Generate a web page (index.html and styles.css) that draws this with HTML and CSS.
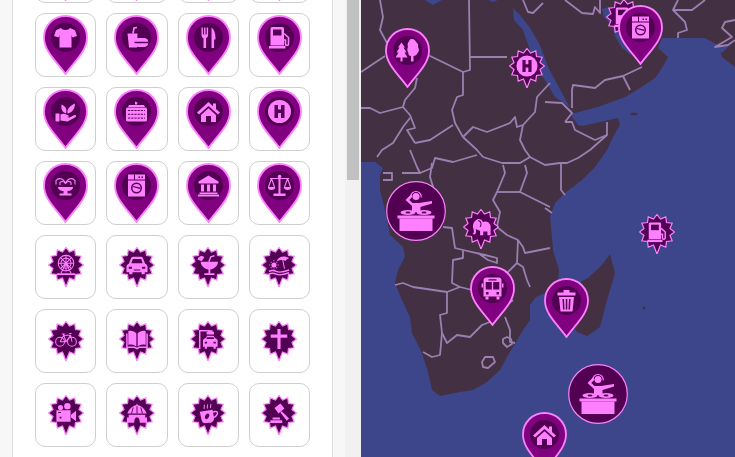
FILE: index.html
```html
<!DOCTYPE html>
<html lang="en">
<head>
<meta charset="utf-8">
<title>Map markers</title>
<link rel="stylesheet" href="styles.css">
</head>
<body>
<svg class="sprite" aria-hidden="true">
<defs>
<symbol id="pin" viewBox="0 0 45 60"><path class="pin-body" d="M22.5 1C10.5 1 1 10.5 1 22.5C1 36 13 46 22.5 59C32 46 44 36 44 22.5C44 10.5 34.5 1 22.5 1Z"/><circle class="dark" cx="22.5" cy="22.5" r="14.5"/></symbol>
<symbol id="star" viewBox="0 0 36 40"><polygon class="star-body" points="18,.5 21.5,5 26.75,2.85 27.5,8.5 33.15,9.25 31,14.5 35.5,18 31,21.5 33.15,26.75 27.5,27.5 26.75,33.15 21.5,31 18,40 14.5,31 9.25,33.15 8.5,27.5 2.85,26.75 5,21.5 .5,18 5,14.5 2.85,9.25 8.5,8.5 9.25,2.85 14.5,5"/></symbol>
<symbol id="i-tee" viewBox="0 0 24 24"><path class="f" d="M7.500 2.500L2.500 4.800L.5 10.500L5 12L6 9.800V22H18V9.800L19 12L23.500 10.500L21.500 4.800L16.500 2.500C15.500 5 8.500 5 7.500 2.500Z"/></symbol>
<symbol id="i-food" viewBox="0 0 24 24"><path class="f" d="M3 8H13L12.500 22H4.500Z"/><path class="l" d="M8.500 8L9.500 2.500L12.500 2"/><rect class="f" x="9.500" y="12.500" width="14.500" height="9" rx="4.500"/><path class="c" d="M10 16.200H24V17.800H10Z"/></symbol>
<symbol id="i-cutlery" viewBox="0 0 24 24"><path class="f" d="M5 2H6.400V9H7.600V2H9V9H10.200V2H11.600V9C11.600 12 9.800 12.500 9.600 13V22.500H7V13C6.800 12.500 5 12 5 9Z"/><path class="f" d="M15 22.500V2C18 4 19.200 9 19 14H17.600V22.500Z"/></symbol>
<symbol id="i-fuel" viewBox="0 0 24 24"><path class="f" d="M4.500 1.500H15A1.500 1.500 0 0 1 16.500 3V20H3V3A1.500 1.500 0 0 1 4.500 1.500Z"/><rect class="c" x="5.500" y="4" width="8.500" height="6"/><rect class="f" x="1.500" y="20.500" width="16.500" height="2.500"/><path class="l" d="M16.500 8L21 12V18.500A1.500 1.500 0 0 1 18 18.500V14.500H16.500"/></symbol>
<symbol id="i-plant" viewBox="0 0 24 24"><path class="f" d="M12.500 14C8 12.500 7.500 8.500 8 5C11 6 14 9 12.500 14Z"/><path class="f" d="M14 14C13 9 17 6 21.500 4C21.500 9 19 13 14 14Z"/><path class="f" d="M2 14H6V22H2Z"/><path class="f" d="M7 15C10 13 13 15 15 16C16 17.300 14 18 12 17.500L16 18L21 15.500C23 15 23 17 21.500 18L14 22L7 21Z"/></symbol>
<symbol id="i-keys" viewBox="0 0 24 24"><path class="f" d="M10.500 2L13 3L12.500 5H10.500Z"/><path class="f" d="M4.500 5.500H19.500L20.500 7.500H3.500Z"/><rect class="f" x="1.500" y="8" width="21" height="14" rx="1.500"/><path class="cl" d="M3.500 11H20.500M3.500 14.800H20.500M3.500 18.600H20.500"/></symbol>
<symbol id="i-home" viewBox="0 0 24 24"><path class="f" d="M12 2.500L.5 13L2.500 15L12 6.500L21.500 15L23.500 13L19.500 9.500V4H16.500V6.800Z"/><path class="f" d="M4.500 15.500L12 8.800L19.500 15.500V22.500H14.500V16.500H9.500V22.500H4.500Z"/></symbol>
<symbol id="i-h" viewBox="0 0 24 24"><circle class="f" cx="12" cy="12" r="11.500"/><path class="c" d="M7 5.500H10.500V10H13.500V5.500H17V18.500H13.500V13.500H10.500V18.500H7Z"/></symbol>
<symbol id="i-fountain" viewBox="0 0 24 24"><path class="b" d="M12 10C10 4.500 5 4 2.500 7V11M12 10C14 4.500 19 4 21.500 7V11"/><path class="b" d="M12 10C10.500 7.500 8 7.500 6.500 9V11.500M12 10C13.500 7.500 16 7.500 17.500 9V11.500"/><path class="f" d="M4.500 13.500H19.500C19.500 16.500 16 17.500 14 17.500V20H18V22H6V20H10V17.500C8 17.500 4.500 16.500 4.500 13.500Z"/></symbol>
<symbol id="i-washer" viewBox="0 0 24 24"><rect class="f" x="3.500" y="1" width="17" height="22"/><path class="c" d="M3.500 6H20.500V7H3.500ZM9.500 1H10.500V6H9.500ZM14 3H15.500V4.500H14ZM17 3H18.500V4.500H17Z"/><circle class="c" cx="12" cy="14.500" r="5.500"/><circle class="f" cx="12" cy="14.500" r="4"/><path class="c" d="M8.500 13.500L15.500 15.500V14L8.500 12.500Z"/></symbol>
<symbol id="i-bank" viewBox="0 0 24 24"><path class="f" d="M12 2L2 8V10H22V8Z"/><path class="f" d="M4.500 11H7.500V18H4.500ZM10.500 11H13.500V18H10.500ZM16.500 11H19.500V18H16.500ZM3 19H21V20.500H3ZM1.500 21H22.500V23H1.500Z"/></symbol>
<symbol id="i-scales" viewBox="0 0 24 24"><path class="f" d="M11 2H13V20H11ZM6 20H18V22.500H6Z"/><path class="b" d="M2.500 5H21.500M4 5L1 13.500M4 5L7 13.500M20 5L17 13.500M20 5L23 13.500"/><path class="f" d="M.2 13.500H7.800C7.800 17.500.2 17.500.2 13.500ZM16.200 13.500H23.800C23.800 17.500 16.200 17.500 16.200 13.500Z"/><circle class="f" cx="12" cy="3" r="1.800"/></symbol>
<symbol id="i-ferris" viewBox="0 0 24 24"><circle class="b" cx="12" cy="10" r="8.500"/><circle class="b" cx="12" cy="10" r="5.500"/><path class="b" d="M12 1.500V18.500M3.500 10H20.500M6 4L18 16M18 4L6 16M12 10L6.500 21M12 10L17.500 21"/><rect class="f" x="2" y="21" width="20" height="2"/></symbol>
<symbol id="i-car" viewBox="0 0 24 24"><path class="f" d="M3 10.500L5.500 4.500C6 3.500 7 3 8 3H16C17 3 18 3.500 18.500 4.500L21 10.500C22.500 11 23.500 12.500 23.500 14V20H20.500V22H17V20H7V22H3.500V20H.5V14C.5 12.500 1.500 11 3 10.500Z"/><path class="c" d="M5.800 10L7.500 5.500H16.500L18.200 10ZM3 14H6.500V16H3ZM17.500 14H21V16H17.500ZM8.500 17H15.500V18H8.500Z"/></symbol>
<symbol id="i-cocktail" viewBox="0 0 24 24"><path class="f" d="M.5 6A4.500 4.500 0 0 1 8 3.500L5 8Z"/><path class="f" d="M4 8.500H23C22.500 14 18 16.500 14.500 17V21H19V23H8V21H12.500V17C9 16.500 4.500 14 4 8.500Z"/><path class="l" d="M13 8.500L15 3L19 2"/></symbol>
<symbol id="i-beach" viewBox="0 0 24 24"><path class="f" d="M9.500 8C11 2.500 18 1 23 4.500C21 5.500 20 6 19 7.500C17 6 13 6 9.500 8Z"/><path class="b" d="M16 6L18 16"/><circle class="f" cx="6.500" cy="12" r="2.800"/><path class="b" d="M6.500 6.800V8M6.500 16V17.200M1.300 12H2.500M10.500 12H11.700M3 8.500L3.800 9.300M9.200 14.700L10 15.500M10 8.500L9.200 9.300M3.800 14.700L3 15.500"/><path class="l" d="M1 19C4 17.500 6 17.500 9 19C12 20.500 15 20.500 23 17.500M1 22C4 20.500 6 20.500 9 22C12 23.500 16 23 23 20.500"/></symbol>
<symbol id="i-bike" viewBox="0 0 24 24"><circle class="b" cx="5.500" cy="15" r="4.800"/><circle class="b" cx="18.500" cy="15" r="4.800"/><path class="b" d="M5.500 15L9.500 8H17L18.500 15M17 8L12 15H5.500M9 6.500L12 15M7.500 6.500H10.500M15.500 6H18"/></symbol>
<symbol id="i-book" viewBox="0 0 24 24"><path class="f" d="M11.300 6C9 3 5 2.500 2.500 3.500V18.500C5.500 17.500 9 18 11.300 20.500Z"/><path class="f" d="M12.700 6C15 3 19 2.500 21.500 3.500V18.500C18.500 17.500 15 18 12.700 20.500Z"/><path class="l" d="M1 6V21H9.500L12 22.500L14.500 21H23V6"/></symbol>
<symbol id="i-carwash" viewBox="0 0 24 24"><path class="l" d="M3 23V3H14"/><path class="f" d="M12 2.500H17V4H18.500V7H10.500V4H12Z"/><path class="f" d="M9.500 11L11 8.500H18L19.500 11C21.500 11.500 22.500 13 22.500 14V20.500H20.500V22.500H18V20.500H11V22.500H8.500V20.500H6.500V14C6.500 13 7.500 11.500 9.500 11Z"/><path class="c" d="M11 10H18L18.800 12H10.200ZM8.500 15H11V16.800H8.500ZM18 15H20.500V16.800H18Z"/></symbol>
<symbol id="i-cross" viewBox="0 0 24 24"><path class="f" d="M10.300 1H13.700V7H21V10.500H13.700V23H10.300V10.500H3V7H10.300Z"/></symbol>
<symbol id="i-movie" viewBox="0 0 24 24"><circle class="f" cx="6" cy="6" r="2.800"/><circle class="f" cx="13.500" cy="4.500" r="3.500"/><rect class="f" x="1.500" y="9" width="15.500" height="12.500"/><path class="f" d="M17.500 14L23 9.500V21L17.500 17Z"/><path class="c" d="M3.500 11H6.500V12H3.500ZM5 16H7V18H5Z"/></symbol>
<symbol id="i-tent" viewBox="0 0 24 24"><path class="f" d="M12 1.500L13 3.500C17 4 21 8 22.500 12.500H1.500C3 8 7 4 11 3.500Z"/><path class="c" d="M11.500 4.500H12.500V12.500H11.500ZM7.500 5.800L8.300 6.200L6.500 12.500H5.500ZM16.500 5.800L15.700 6.200L17.500 12.500H18.500Z"/><path class="f" d="M3 14H21V17H23V22.500H15C15 19 14 16.500 12 16.500C10 16.500 9 19 9 22.500H1V17H3Z"/></symbol>
<symbol id="i-coffee" viewBox="0 0 24 24"><path class="f" d="M3 10.500L17 8.500L18.500 17C19 20 17 22 15 22.500L10 23C7.500 23.500 5.500 22 5 19.500Z"/><path class="l" d="M17.500 11C20 9.500 23.500 10.500 22 13.500C21 15.500 19.500 16.500 18 17"/><path class="b" d="M8 7.500C7 6 8.500 5 8 3M11.500 7C10.500 5.500 12 4.500 11.500 2.500M15 6.500C14 5 15.500 4 15 2"/><ellipse class="c" cx="11" cy="15.500" rx="2" ry="3.200" transform="rotate(30 11 15.500)"/></symbol>
<symbol id="i-gavel" viewBox="0 0 24 24"><path class="f" d="M7 6.500L13.500 1.500L18 7L11.500 12.500Z"/><path class="f" d="M13.500 11.500L15 10L23 18L20.500 20.500Z"/><path class="f" d="M5 17H13V19H5ZM2.500 20H15.500V23H2.500Z"/></symbol>
<symbol id="i-trees" viewBox="0 0 24 24"><path class="f" d="M6 4L9.500 9H8L11 14H9L12 19H7V23H5V19H0L3 14H1L4 9H2.500Z"/><path class="f" d="M15.500 .5C18.500 0 20 2 20.500 3.500C22.500 4.500 23 7 22.500 8.500C24 10.500 23.500 13.500 22 14.500C21.500 16.500 19.500 17.500 18 17.500V23H15.500V17.500C13.500 17.500 12.500 15.500 12.800 14C11.500 12.500 11.500 10 12.500 8.500C11.800 6.500 12 4 13.500 3C13.800 1.800 14.500 .8 15.500 .5Z"/></symbol>
<symbol id="i-elephant" viewBox="0 0 24 24"><path class="f" d="M6 5C8.500 2 13 3 14 6.500C17 5 21.500 6.500 22.500 10.500V21H19V17H14.500V21H11V16C9.500 16 7.500 15 6.500 14V18C6.500 20 4.500 20.500 2.500 19.500C4 19 4.500 18 4 15C2.500 11 3 8 6 5Z"/><path class="cs" d="M9 5C12 5.500 13 9 11 12"/></symbol>
<symbol id="i-bus" viewBox="0 0 24 24"><path class="f" d="M5.500 1H18.500C20 1 21 2 21 3.500V20H3V3.500C3 2 4 1 5.500 1Z"/><path class="f" d="M5 20H8V23H5ZM16 20H19V23H16ZM1 7H2.500V11H1ZM21.500 7H23V11H21.500Z"/><path class="c" d="M8 2.800H16V4H8ZM5.200 5.500H11.300V13H5.200ZM12.700 5.500H18.800V13H12.700ZM5.500 15.500H8V18H5.500ZM16 15.500H18.500V18H16Z"/></symbol>
<symbol id="i-trash" viewBox="0 0 24 24"><path class="f" d="M9 1.500H15V4H21V7H3V4H9Z"/><path class="f" d="M4.500 8.500H19.500L18 23H6Z"/><path class="c" d="M8 10.500H9.500L10 21H8.500ZM11.300 10.500H12.800V21H11.300ZM14.500 10.500H16L15.500 21H14Z"/></symbol>
<symbol id="dj" viewBox="0 0 60 60"><circle class="dj-body" cx="30" cy="30" r="29.300"/><circle class="f" cx="30" cy="15.500" r="3.500"/><path class="b" d="M24.800 16.500C24.300 8.500 35.700 8.500 35.200 16.500"/><path class="f" d="M19.500 19L25 13.500L26.500 15.500L23.300 19L26.500 22H33L46 20V22.500L34.500 26V31H26V25Z"/><ellipse class="f" cx="22" cy="31.500" rx="7.500" ry="2.500"/><ellipse class="f" cx="38" cy="31.500" rx="7.500" ry="2.500"/><ellipse class="c" cx="22" cy="31.500" rx="2.500" ry="1"/><ellipse class="c" cx="38" cy="31.500" rx="2.500" ry="1"/><rect class="f" x="11.500" y="34.500" width="37" height="3"/><rect class="f" x="13.500" y="37.500" width="33" height="12.500"/></symbol>
</defs>
</svg>

<div class="app">
  <aside class="side">
    <div class="panel">
      <div class="grid">
        <div class="cell"><svg class="pin"><use href="#pin"/></svg></div>
        <div class="cell"><svg class="pin"><use href="#pin"/></svg></div>
        <div class="cell"><svg class="pin"><use href="#pin"/></svg></div>
        <div class="cell"><svg class="pin"><use href="#pin"/></svg></div>

        <div class="cell"><svg class="pin"><use href="#pin"/><use href="#i-tee" x="10.500" y="10.500" width="24" height="24"/></svg></div>
        <div class="cell"><svg class="pin"><use href="#pin"/><use href="#i-food" x="10.500" y="10.500" width="24" height="24"/></svg></div>
        <div class="cell"><svg class="pin"><use href="#pin"/><use href="#i-cutlery" x="10.500" y="10.500" width="24" height="24"/></svg></div>
        <div class="cell"><svg class="pin"><use href="#pin"/><use href="#i-fuel" x="10.500" y="10.500" width="24" height="24"/></svg></div>

        <div class="cell"><svg class="pin"><use href="#pin"/><use href="#i-plant" x="10.500" y="10.500" width="24" height="24"/></svg></div>
        <div class="cell"><svg class="pin"><use href="#pin"/><use href="#i-keys" x="10.500" y="10.500" width="24" height="24"/></svg></div>
        <div class="cell"><svg class="pin"><use href="#pin"/><use href="#i-home" x="10.500" y="10.500" width="24" height="24"/></svg></div>
        <div class="cell"><svg class="pin"><use href="#pin"/><use href="#i-h" x="10.500" y="10.500" width="24" height="24"/></svg></div>

        <div class="cell"><svg class="pin"><use href="#pin"/><use href="#i-fountain" x="10.500" y="10.500" width="24" height="24"/></svg></div>
        <div class="cell"><svg class="pin"><use href="#pin"/><use href="#i-washer" x="10.500" y="10.500" width="24" height="24"/></svg></div>
        <div class="cell"><svg class="pin"><use href="#pin"/><use href="#i-bank" x="10.500" y="10.500" width="24" height="24"/></svg></div>
        <div class="cell"><svg class="pin"><use href="#pin"/><use href="#i-scales" x="10.500" y="10.500" width="24" height="24"/></svg></div>

        <div class="cell"><svg class="star"><use href="#star"/><use href="#i-ferris" x="7" y="7" width="22" height="22"/></svg></div>
        <div class="cell"><svg class="star"><use href="#star"/><use href="#i-car" x="7" y="7" width="22" height="22"/></svg></div>
        <div class="cell"><svg class="star"><use href="#star"/><use href="#i-cocktail" x="7" y="7" width="22" height="22"/></svg></div>
        <div class="cell"><svg class="star"><use href="#star"/><use href="#i-beach" x="7" y="7" width="22" height="22"/></svg></div>

        <div class="cell"><svg class="star"><use href="#star"/><use href="#i-bike" x="7" y="7" width="22" height="22"/></svg></div>
        <div class="cell"><svg class="star"><use href="#star"/><use href="#i-book" x="7" y="7" width="22" height="22"/></svg></div>
        <div class="cell"><svg class="star"><use href="#star"/><use href="#i-carwash" x="7" y="7" width="22" height="22"/></svg></div>
        <div class="cell"><svg class="star"><use href="#star"/><use href="#i-cross" x="7" y="7" width="22" height="22"/></svg></div>

        <div class="cell"><svg class="star"><use href="#star"/><use href="#i-movie" x="7" y="7" width="22" height="22"/></svg></div>
        <div class="cell"><svg class="star"><use href="#star"/><use href="#i-tent" x="7" y="7" width="22" height="22"/></svg></div>
        <div class="cell"><svg class="star"><use href="#star"/><use href="#i-coffee" x="7" y="7" width="22" height="22"/></svg></div>
        <div class="cell"><svg class="star"><use href="#star"/><use href="#i-gavel" x="7" y="7" width="22" height="22"/></svg></div>
      </div>
    </div>
    <div class="scrollbar"><div class="thumb"></div></div>
  </aside>

  <main class="map">
    <svg class="geo" viewBox="361 0 374 457">
      <polygon class="land" points="361,0 425,0 433,5 442,0 488,0 493,2 498,0 735,0 735,67 722,57 718,45 705,38 680,38 662,38 658,48 668,57 662,68 655,78 640,88 625,97 598,107 575,113 573,113 562,93 548,67 540,45 530,28 520,15 513,8 514,20 523,30 530,50 538,70 545,80 555,97 570,107 572,117 578,125 582,126 600,122 618,118 620,125 613,137 607,150 595,167 582,180 565,193 555,203 550,217 552,237 553,250 559,270 558,283 545,293 536,297 530,305 530,320 523,330 516,342 507,357 500,370 487,382 473,390 460,392 440,396 432,390 428,372 422,353 412,333 410,317 402,300 395,283 398,270 405,257 403,247 390,235 385,210 380,190 380,175 383,168 375,162 361,162"/>
      <polygon class="land" points="610,254 615,273 607,300 600,327 587,336 577,332 570,322 568,300 575,285 588,278 602,265"/>
      <ellipse class="land" cx="634" cy="114" rx="3.500" ry="1.200"/>
      <circle class="land" cx="644" cy="308" r="1.500"/>
      <polygon class="sea" points="602,9 609,7 640,30 650,55 630,54 622,48 615,36 612,25 604,17"/>
      <polygon class="sea" points="715,47 730,45 722,53"/>
      <g class="borders">
        <polyline points="380,0 383,17 380,30 387,43"/>
        <polyline points="361,72 385,56"/>
        <polyline points="428,55 463,72 470,70 469,0"/>
        <polyline points="470,57 507,57"/>
        <polyline points="463,72 463,95 457,97 452,110 455,123 463,137 477,150 483,157"/>
        <polyline points="361,108 370,108 380,113 403,107 410,115 415,128 407,130 415,143"/>
        <polyline points="403,107 405,100 415,88 417,78"/>
        <polyline points="410,118 403,127 393,143 382,150 377,157"/>
        <polyline points="415,143 430,140 453,125"/>
        <polyline points="463,137 473,127 487,132 510,123 515,117 517,127 523,125 535,112 537,97 550,83"/>
        <polyline points="523,125 520,140 525,150 530,157"/>
        <polyline points="523,0 528,12 533,13 543,3"/>
        <polyline points="565,0 582,13 593,14 595,7 600,13 600,0"/>
        <polyline points="572,108 572,90 573,85 595,88 605,80 623,76 642,67"/>
        <polyline points="623,76 630,90"/>
        <polyline points="545,102 562,103 572,113 565,122"/>
        <polyline points="565,122 572,122 575,130 595,140 607,135 607,122"/>
        <polyline points="607,135 590,150 578,158 567,163 560,163 545,165 530,157 520,163 502,163 483,157"/>
        <polyline points="678,0 673,10 685,22 687,30 678,33 678,38"/>
        <polyline points="673,10 692,10 705,0"/>
        <polyline points="735,20 725,22 722,28 732,37 715,47 728,45 735,40"/>
        <polyline points="410,150 417,167 420,173 402,173"/>
        <polyline points="383,173 392,173 392,180 383,180"/>
        <polyline points="420,173 432,168 435,158 453,162 477,155"/>
        <polyline points="432,163 430,177 434,190"/>
        <polyline points="503,165 505,173 497,192 493,200 500,212 497,227 507,235 518,240 523,247 525,253 550,248"/>
        <polyline points="525,165 527,173 520,192 550,207"/>
        <polyline points="497,192 520,192"/>
        <polyline points="561,163 561,190 565,195"/>
        <polyline points="545,208 552,213"/>
        <polyline points="443,227 452,228 455,248 463,250 485,255 497,258 497,263 488,260 478,253"/>
        <polyline points="463,250 463,258 453,260 452,283 460,287"/>
        <polyline points="395,285 403,283 413,287 447,292 460,287 480,292 505,286"/>
        <polyline points="447,292 447,313 440,315 442,333 440,355 432,357 423,352"/>
        <polyline points="442,333 447,343 457,335 470,337 482,325 490,322 503,308 513,300"/>
        <polyline points="518,240 517,263 513,267 505,275"/>
        <polyline points="517,263 523,267 527,280 530,287"/>
        <polyline points="505,317 510,330 510,342 515,343"/>
        <polygon points="507,337 511,339 512,344 507,347 503,343 503,339"/>
        <polygon points="482,362 485,357 493,357 495,362 488,368 483,367"/>
      </g>
    </svg>
    <svg class="marker pin m-tree"><use href="#pin"/><use href="#i-trees" x="10.500" y="10.500" width="24" height="24"/></svg>
    <svg class="marker star m-hotel"><use href="#star"/><use href="#i-h" x="7" y="7" width="22" height="22"/></svg>
    <svg class="marker star m-back"><use href="#star"/><use href="#i-fuel" x="7" y="7" width="22" height="22"/></svg>
    <svg class="marker pin m-wash"><use href="#pin"/><use href="#i-washer" x="10.500" y="10.500" width="24" height="24"/></svg>
    <svg class="marker disc m-dj1"><use href="#dj"/></svg>
    <svg class="marker star m-ele"><use href="#star"/><use href="#i-elephant" x="7" y="7" width="22" height="22"/></svg>
    <svg class="marker pin m-bus"><use href="#pin"/><use href="#i-bus" x="10.500" y="10.500" width="24" height="24"/></svg>
    <svg class="marker pin m-trash"><use href="#pin"/><use href="#i-trash" x="10.500" y="10.500" width="24" height="24"/></svg>
    <svg class="marker star m-fuel"><use href="#star"/><use href="#i-fuel" x="7" y="7" width="22" height="22"/></svg>
    <svg class="marker disc m-dj2"><use href="#dj"/></svg>
    <svg class="marker pin m-home"><use href="#pin"/><use href="#i-home" x="10.500" y="10.500" width="24" height="24"/></svg>
  </main>
</div>
</body>
</html>
```

FILE: styles.css
```css
html, body {
  margin: 0;
  height: 100%;
  overflow: hidden;
  font-family: "Liberation Sans", sans-serif;
}
.sprite { position: absolute; width: 0; height: 0; }

.app { display: flex; height: 100vh; }

.side {
  display: flex;
  flex: 0 0 361px;
  height: 100%;
  background: #f7f7f7;
}
.panel {
  box-sizing: border-box;
  width: 321px;
  height: 100%;
  margin-left: 12px;
  margin-right: 12px;
  padding-left: 22px;
  background: #fff;
  border-left: 1px solid #dedede;
  border-right: 1px solid #dedede;
  overflow: hidden;
}
.grid {
  display: grid;
  grid-template-columns: repeat(4, 1fr);
  grid-auto-rows: 64px;
  gap: 10px;
  width: 275px;
  margin-top: -61px;
}
.cell {
  display: flex;
  align-items: center;
  justify-content: center;
  box-sizing: border-box;
  border: 1px solid #cfcfcf;
  border-radius: 10px;
  background: #fff;
}
.scrollbar {
  flex: 0 0 16px;
  box-sizing: border-box;
  padding: 0 2px;
  background: #f1f1f1;
}
.thumb { height: 180px; background: #c1c1c1; }

.pin { width: 45px; height: 60px; overflow: visible; display: block; }
.star { width: 36px; height: 40px; overflow: visible; display: block; }
.disc { width: 60px; height: 60px; display: block; }

.pin-body { fill: #800080; stroke: #ff80ff; stroke-width: 1.8; }
.star-body { fill: #520052; stroke: #ff80ff; stroke-width: 1.2; }
.dj-body { fill: #520052; stroke: #ff80ff; stroke-width: 1.2; }
.dark { fill: #520052; }
.f { fill: #ff80ff; }
.c { fill: #520052; }
.l { fill: none; stroke: #ff80ff; stroke-width: 1.6; }
.b { fill: none; stroke: #ff80ff; stroke-width: 1.1; }
.cs { fill: none; stroke: #520052; stroke-width: 1.1; }
.cl { fill: none; stroke: #520052; stroke-width: 1; stroke-dasharray: 2.200 1; }

.map {
  position: relative;
  flex: 1;
  height: 100%;
  overflow: hidden;
  background: #3d468b;
}
.geo { display: block; width: 374px; height: 457px; }
.land { fill: #443043; }
.sea { fill: #3d468b; }
.borders polyline, .borders polygon {
  fill: none;
  stroke: #9a80b0;
  stroke-width: 1.8;
  stroke-linejoin: round;
}

.marker { position: absolute; }
.m-tree  { left: 24px;  top: 28px; }
.m-hotel { left: 148px; top: 48px; }
.m-back  { left: 245px; top: -1px; }
.m-wash  { left: 257px; top: 5px; }
.m-dj1   { left: 25px;  top: 181px; }
.m-ele   { left: 102px; top: 209px; }
.m-bus   { left: 109px; top: 266px; }
.m-trash { left: 183px; top: 278px; }
.m-fuel  { left: 278px; top: 214px; }
.m-dj2   { left: 207px; top: 364px; }
.m-home  { left: 161px; top: 412px; }
```
